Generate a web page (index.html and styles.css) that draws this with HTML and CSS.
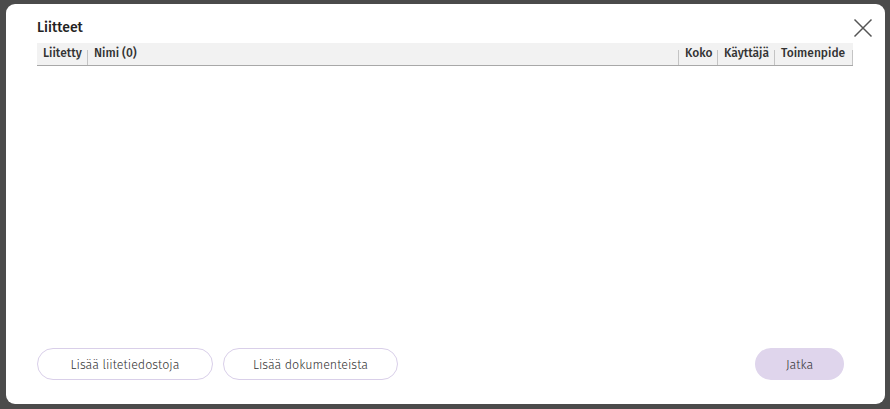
FILE: index.html
```html
<!DOCTYPE html>
<html lang="fi">
<head>
<meta charset="utf-8">
<title>Liitteet</title>
<link rel="stylesheet" href="styles.css">
</head>
<body>
<div class="overlay">
  <div class="modal">
    <div class="modal-head">
      <h2 class="title">Liitteet</h2>
      <button class="close" aria-label="Sulje">
        <svg width="20" height="20" viewBox="0 0 20 20"><path d="M1.5 1.5 L18.5 18.5 M18.5 1.5 L1.5 18.5" stroke="#555" stroke-width="1.5" fill="none"/></svg>
      </button>
    </div>
    <div class="table">
      <div class="thead">
        <div class="th c-liitetty">Liitetty</div>
        <div class="th c-nimi">Nimi (0)</div>
        <div class="th c-koko">Koko</div>
        <div class="th c-kayttaja">Käyttäjä</div>
        <div class="th c-toim">Toimenpide</div>
      </div>
    </div>
    <div class="spacer"></div>
    <div class="footer">
      <div class="left-btns">
        <button class="btn btn-outline b1">Lisää liitetiedostoja</button>
        <button class="btn btn-outline b2">Lisää dokumenteista</button>
      </div>
      <button class="btn btn-primary">Jatka</button>
    </div>
  </div>
</div>
</body>
</html>
```

FILE: styles.css
```css
html, body {
  margin: 0;
  padding: 0;
  height: 100%;
}
body {
  background: #4b4b4b;
  font-family: "Fira Sans", "Lato", "Noto Sans", sans-serif;
  color: #2b2b2b;
}
.overlay {
  padding: 4px 5px 5px 6px;
  height: 409px;
  box-sizing: border-box;
}
.modal {
  background: #fff;
  border-radius: 9px;
  height: 400px;
  width: 879px;
  box-sizing: border-box;
  padding: 0 32px 24px 31px;
  display: flex;
  flex-direction: column;
}
.modal-head {
  display: flex;
  justify-content: space-between;
  align-items: flex-start;
  height: 39px;
}
.title {
  margin: 15px 0 0 0;
  font-size: 14px;
  font-weight: 500;
  color: #222;
  line-height: 18px;
}
.close {
  border: 0;
  background: none;
  padding: 0;
  margin: 14px -20px 0 0;
  width: 20px;
  height: 20px;
  cursor: pointer;
}
.close svg { display: block; }
.table {
  width: 816px;
}
.thead {
  display: flex;
  background: #f2f2f2;
  border-bottom: 1px solid #a8a8a8;
  height: 22px;
  align-items: stretch;
}
.th {
  font-size: 12px;
  font-weight: 500;
  color: #333;
  padding: 2px 6px 0 6px;
  line-height: 16px;
  position: relative;
  box-sizing: border-box;
}
.th::after {
  content: "";
  position: absolute;
  right: 0;
  top: 7px;
  bottom: 0;
  width: 1px;
  background: #c4c4c4;
}
.c-liitetty { width: 51px; }
.c-nimi { flex: 1; }
.c-koko { width: 39px; }
.c-kayttaja { width: 57px; }
.c-toim { width: 78px; }
.spacer { flex: 1; }
.footer {
  display: flex;
  justify-content: space-between;
  align-items: center;
  padding-right: 9px;
}
.left-btns {
  display: flex;
  gap: 10px;
}
.btn {
  font-family: inherit;
  font-size: 12.5px;
  font-weight: 300;
  color: #333;
  height: 32px;
  border-radius: 16px;
  cursor: pointer;
  padding: 0;
}
.btn-outline {
  background: #fff;
  border: 1px solid #d9cfe9;
}
.b1 { width: 176px; }
.b2 { width: 175px; }
.btn-primary {
  background: #dfd5ec;
  border: 0;
  width: 89px;
}
```
